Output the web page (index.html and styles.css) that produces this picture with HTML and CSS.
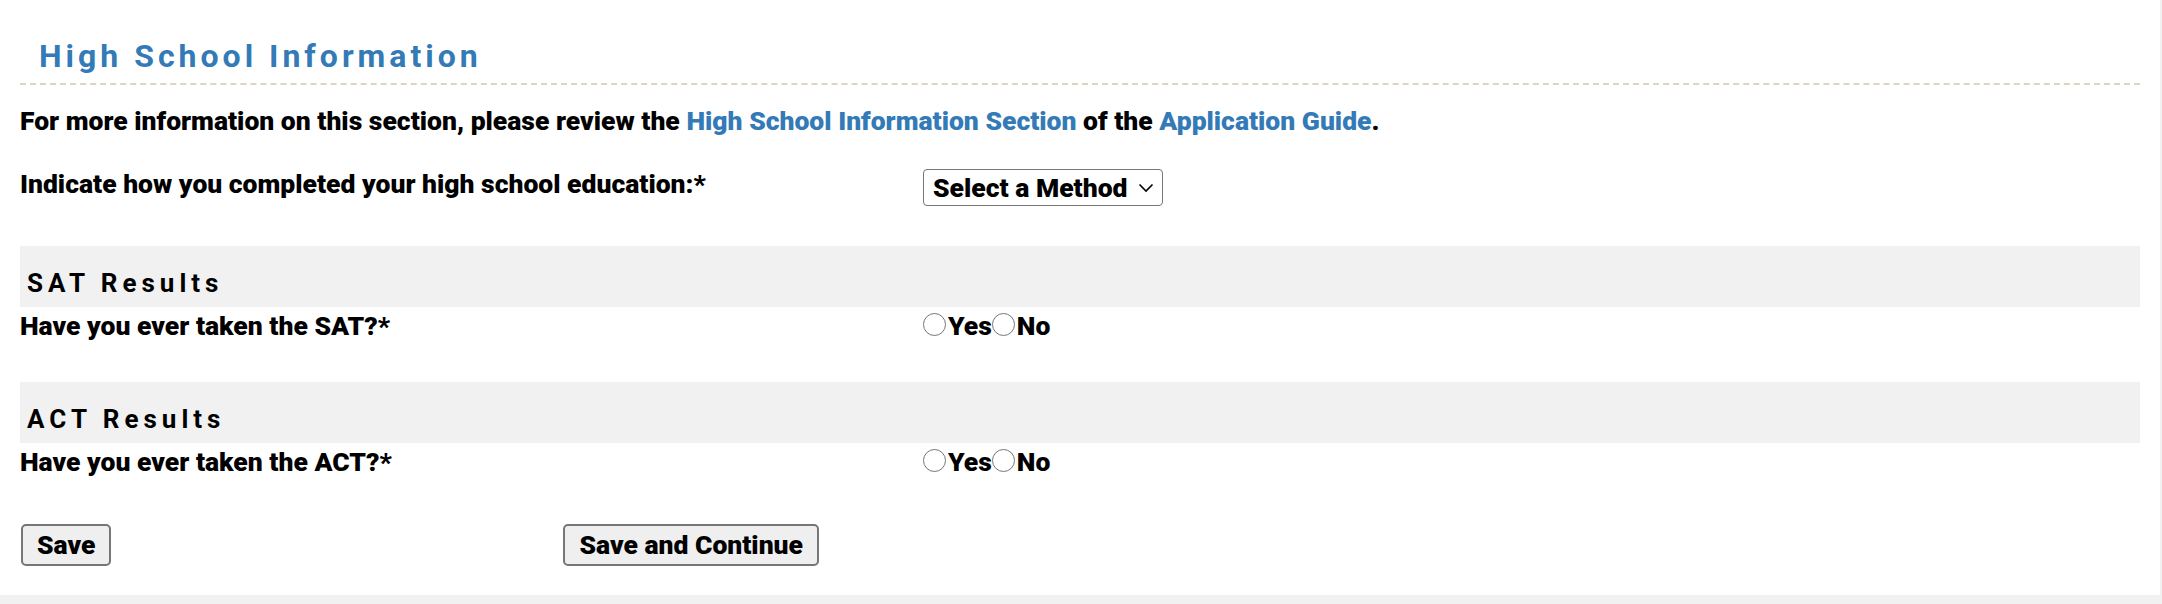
FILE: index.html
```html
<!DOCTYPE html>
<html lang="en">
<head>
<meta charset="utf-8">
<title>High School Information</title>
<link rel="stylesheet" href="styles.css">
</head>
<body>
<div class="page">
  <div class="content">
    <h2 class="title">High School Information</h2>
    <p class="intro">For more information on this section, please review the <a href="#">High School Information Section</a> of the <a href="#">Application Guide</a>.</p>

    <div class="row row-select">
      <div class="label">Indicate how you completed your high school education:*</div>
      <div class="field">
        <label class="select">
          <select>
            <option>Select a Method</option>
          </select>
          <svg class="chev" width="16" height="10" viewBox="0 0 16 10"><path d="M1.5 1.5 L8 8 L14.5 1.5" fill="none" stroke="#000" stroke-width="1.6"/></svg>
        </label>
      </div>
    </div>

    <h3 class="band">SAT Results</h3>
    <div class="row">
      <div class="label">Have you ever taken the SAT?*</div>
      <div class="field radios">
        <label class="radio"><input type="radio" name="sat">Yes</label>
        <label class="radio"><input type="radio" name="sat">No</label>
      </div>
    </div>

    <h3 class="band">ACT Results</h3>
    <div class="row">
      <div class="label">Have you ever taken the ACT?*</div>
      <div class="field radios">
        <label class="radio"><input type="radio" name="act">Yes</label>
        <label class="radio"><input type="radio" name="act">No</label>
      </div>
    </div>

    <div class="buttons">
      <button class="btn btn-save" type="button">Save</button>
      <button class="btn btn-continue" type="button">Save and Continue</button>
    </div>
  </div>
</div>
</body>
</html>
```

FILE: styles.css
```css
html, body {
  margin: 0;
  padding: 0;
}
body {
  background: #f1f1f1;
  font-family: Roboto, "Liberation Sans", Arial, sans-serif;
  color: #000;
}
.page {
  width: 2160px;
  height: 595px;
  background: #fff;
}
.content {
  padding: 37px 20px 0 20px;
  width: 2120px;
}
.title {
  margin: 0;
  padding: 0 0 8px 19px;
  font-size: 32px;
  line-height: 38px;
  font-weight: 700;
  letter-spacing: 4px;
  color: #337ab7;
  border-bottom: 2px dashed #dcd6bd;
}
.intro {
  margin: 20px 0 0 0;
  font-size: 26.5px;
  line-height: 32px;
  font-weight: 900;
}
.intro a {
  color: #337ab7;
  text-decoration: none;
}
.row {
  display: grid;
  grid-template-columns: 903px 1fr;
  font-size: 26.5px;
  line-height: 32px;
  font-weight: 900;
  padding-top: 3px;
}
.row-select {
  margin-top: 31px;
  padding-top: 0;
}
.field {
  display: flex;
  align-items: flex-start;
}
.select {
  margin-top: 1px;
  display: flex;
  align-items: center;
  height: 37px;
  box-sizing: border-box;
  border: 1.5px solid #767676;
  border-radius: 4px;
  padding: 0 8px 0 9px;
  background: #fff;
}
.select select {
  appearance: none;
  -webkit-appearance: none;
  border: 0;
  background: transparent;
  padding: 0;
  margin: 0;
  font: 900 26.5px/32px Roboto, "Liberation Sans", Arial, sans-serif;
  color: #000;
  outline: none;
}
.chev {
  margin-left: 10px;
  margin-top: 1px;
}
.band {
  margin: 40px 0 0 0;
  height: 61px;
  box-sizing: border-box;
  padding: 21px 0 0 7px;
  background: #f1f1f1;
  font-size: 26px;
  line-height: 32px;
  font-weight: 700;
  letter-spacing: 5px;
}
.radios {
  align-items: center;
  height: 32px;
}
.radio {
  display: inline-flex;
  align-items: center;
}
.radio input {
  appearance: none;
  -webkit-appearance: none;
  width: 23px;
  height: 23px;
  margin: 0 2px 3px 0;
  box-sizing: border-box;
  border: 1.5px solid #767676;
  border-radius: 50%;
  background: #fff;
}
.buttons {
  margin-top: 46px;
  display: flex;
  align-items: flex-start;
  padding-left: 1px;
}
.btn {
  height: 42px;
  box-sizing: border-box;
  border: 2px solid #767676;
  border-radius: 5px;
  background: #efefef;
  padding: 0 14px;
  font: 900 26.5px/32px Roboto, "Liberation Sans", Arial, sans-serif;
  color: #000;
}
.btn-continue {
  margin-left: 452px;
}
```
